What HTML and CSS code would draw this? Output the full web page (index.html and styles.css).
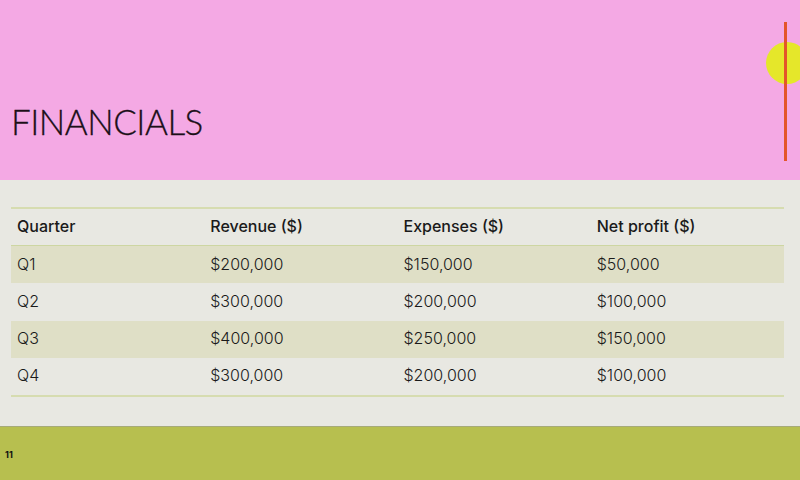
FILE: index.html
```html
<!DOCTYPE html>
<html>
<head>
<meta charset="utf-8">
<link rel="stylesheet" href="styles.css">
</head>
<body>
<div class="slide">
  <header class="hero">
    <h1 class="title">FINANCIALS</h1>
    <div class="deco">
      <span class="sun"></span>
      <span class="bar"></span>
    </div>
  </header>
  <main class="content">
    <table class="fin">
      <thead>
        <tr><th>Quarter</th><th>Revenue ($)</th><th>Expenses ($)</th><th>Net profit ($)</th></tr>
      </thead>
      <tbody>
        <tr class="alt"><td>Q1</td><td>$200,000</td><td>$150,000</td><td>$50,000</td></tr>
        <tr><td>Q2</td><td>$300,000</td><td>$200,000</td><td>$100,000</td></tr>
        <tr class="alt"><td>Q3</td><td>$400,000</td><td>$250,000</td><td>$150,000</td></tr>
        <tr><td>Q4</td><td>$300,000</td><td>$200,000</td><td>$100,000</td></tr>
      </tbody>
    </table>
  </main>
  <footer class="foot"><span class="num">11</span></footer>
</div>
</body>
</html>
```
FILE: styles.css
```css
* { box-sizing: border-box; }
html, body { margin: 0; padding: 0; }
body { width: 800px; height: 480px; overflow: hidden; font-family: "Inter", "Open Sans", sans-serif; color: #1a1a1a; }
.slide { width: 800px; height: 480px; display: flex; flex-direction: column; }
.hero { height: 180px; background: #f4a9e4; position: relative; display: flex; align-items: flex-start; }
.title { margin: 99px 0 0 11px; font-family: "Lato", "Inter", sans-serif; font-size: 35px; font-weight: 300; letter-spacing: -0.5px; line-height: 44px; color: #1c1018; -webkit-text-stroke: 0.3px #1c1018; }
.deco { position: absolute; left: 0; top: 0; width: 800px; height: 180px; overflow: hidden; }
.sun { position: absolute; left: 766px; top: 42px; width: 42px; height: 42px; border-radius: 50%; background: #e5e72a; }
.bar { position: absolute; left: 784px; top: 22px; width: 3px; height: 139px; background: #e4552a; }
.content { flex: 1; background: #e8e8e2; padding: 27px 16px 0 11px; border-bottom: 1px solid #a6aa7a; }
.fin { width: 773px; border-collapse: collapse; table-layout: fixed; font-size: 16px; }
.fin th, .fin td { text-align: left; padding: 0 6px 2px; height: 37.5px; }
.fin thead tr { border-top: 2px solid #d6dcb0; border-bottom: 1px solid #cdd6a2; }
.fin th { font-weight: 450; }
.fin td { font-weight: 300; }
.fin tbody tr:last-child { border-bottom: 2px solid #d6dcb0; }
.fin tr.alt { background: #dfdfc6; }
.foot { height: 53px; background: #b7bf4f; padding: 15px 0 0 5px; }
.num { font-size: 9px; font-weight: 700; color: #111; }
```
